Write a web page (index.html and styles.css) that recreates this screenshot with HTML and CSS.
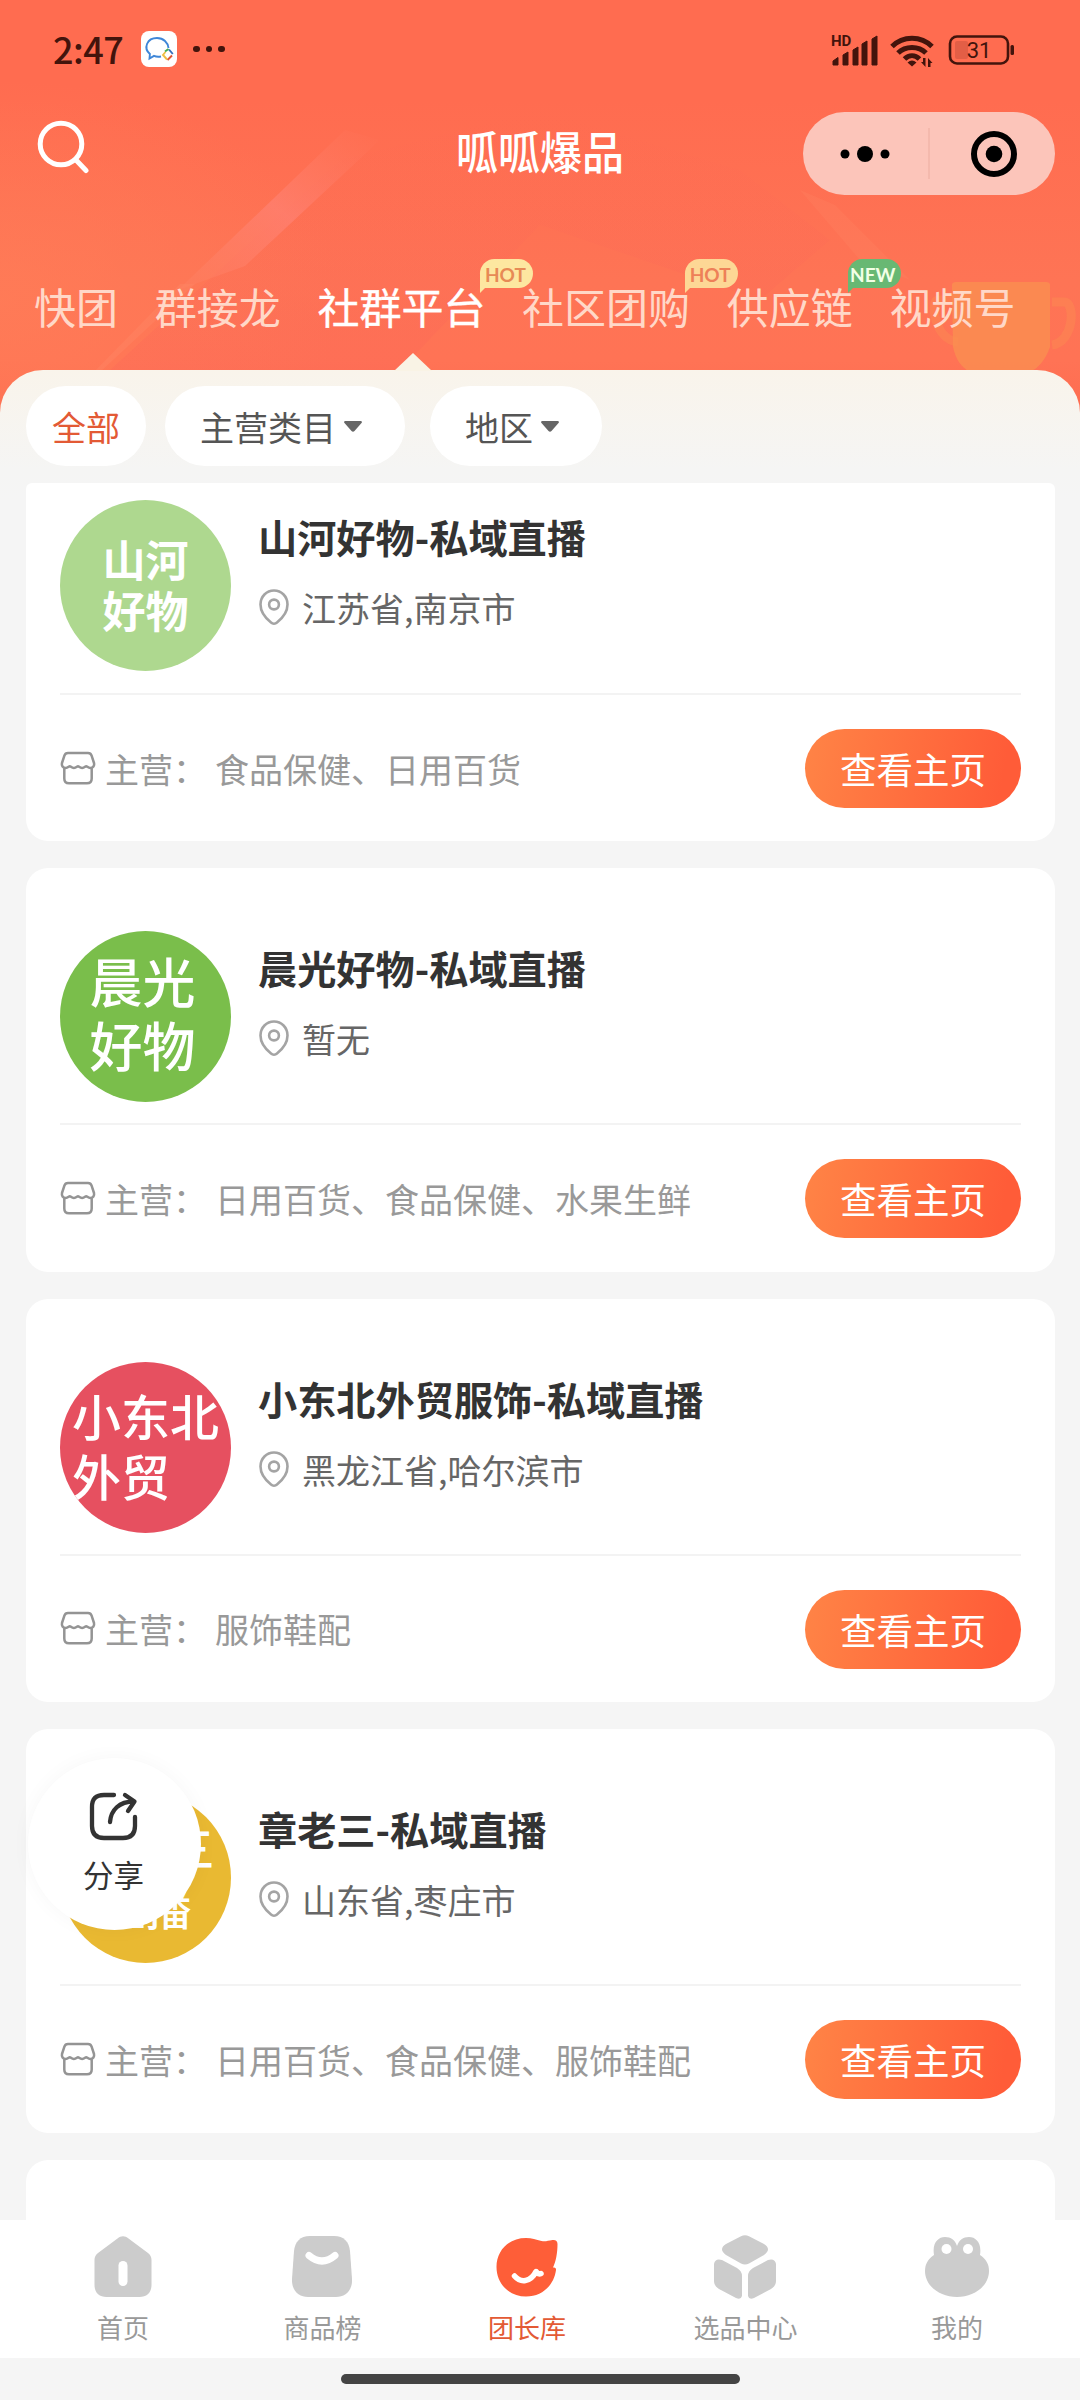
FILE: index.html
```html
<!DOCTYPE html>
<html lang="zh-CN">
<head>
<meta charset="utf-8">
<title>呱呱爆品</title>
<link rel="stylesheet" href="styles.css">
</head>
<body>
<svg width="0" height="0" class="defs" aria-hidden="true">
  <symbol id="pin" viewBox="0 0 30 36"><path d="M15 1.500C7.500 1.500 1.500 7.500 1.500 15.500c0 8 5.500 14 10.500 18a4.500 4.500 0 0 0 6 0c5-4 10.500-10 10.500-18 0-8-6-14-13.500-14z" fill="none" stroke="#a4a4a4" stroke-width="2.600"/><circle cx="15" cy="15.500" r="4.900" fill="none" stroke="#a4a4a4" stroke-width="2.600"/></symbol>
  <symbol id="shop" viewBox="0 0 36 34"><path d="M8 2h20c2 0 3 .8 3.600 2.600L34 12c.6 2.500-.9 5-3.600 5-2.300 0-3.300-1.800-4.200-1.800s-1.800 1.800-4.100 1.800-3.200-1.800-4.100-1.800-1.800 1.800-4.100 1.800-3.200-1.800-4.100-1.800S7.900 17 5.600 17C2.900 17 1.400 14.500 2 12l2.400-7.400C5 2.800 6 2 8 2zM4.300 17v10.500c0 3.500 1.700 4.800 4.700 4.800h18c3 0 4.700-1.300 4.700-4.800V17" fill="none" stroke="#949494" stroke-width="2.500" stroke-linejoin="round"/></symbol>
</svg>
<div class="phone">
  <header class="hero">
    <svg class="backdrop" viewBox="0 0 1080 430" aria-hidden="true">
      <defs>
        <linearGradient id="streak" x1="1" y1="0" x2="0" y2="1"><stop offset="0" stop-color="#ff8066" stop-opacity="0"/><stop offset=".5" stop-color="#ff8478" stop-opacity=".6"/><stop offset="1" stop-color="#ff8060" stop-opacity=".4"/></linearGradient>
        <linearGradient id="shade" x1="0" y1="0" x2="0" y2="1"><stop offset="0" stop-color="#fb6558" stop-opacity="0"/><stop offset="1" stop-color="#fb6558" stop-opacity=".3"/></linearGradient>
        <radialGradient id="glow"><stop offset="0" stop-color="#ff7c57" stop-opacity=".8"/><stop offset="1" stop-color="#ff7c57" stop-opacity="0"/></radialGradient>
      </defs>
      <ellipse cx="0" cy="300" rx="340" ry="220" fill="url(#glow)"/>
      <path d="M340 160 540 110 740 170 830 240 760 300 540 225 400 370 110 370z" fill="url(#shade)"/>
      <path d="M345 130 380 140 245 266 178 290z" fill="url(#streak)"/>
      <path d="M180 284 94 372 100 372 195 284z" fill="#ff8a68" opacity=".35"/>
      <path d="M800 190 835 205 910 280 860 260z" fill="#ff8a68" opacity=".2"/>
      <g fill="none" stroke="#fb8952" stroke-width="9" opacity=".5"><path d="M1052 302h12c12 0 10 40-12 43"/><path d="M953 300h-15c-8 0-4 40 20 42"/></g>
      <path d="M952 285q0-3 4-3h90q4 0 4 3v62c-5 14-12 21-20 25h-60c-9-5-14-12-17-25z" fill="#f99050" opacity=".75"/>
    </svg>
    <div class="status">
      <span class="clock">2:47</span>
      <svg class="app" viewBox="0 0 36 36"><rect width="36" height="36" rx="8" fill="#fff"/><path d="M20 25.500c-2.500.5-5 .3-7-.6L8.500 27.500l.4-4.500C2 17 6 7 16 7c6.500 0 11 4.500 11.500 10" fill="none" stroke="#3e86d8" stroke-width="1.900"/><g fill="none" stroke-width="1.900"><path d="M24 20.500 27.500 18" stroke="#41ad51"/><path d="M28 18.500l3.800 4.500" stroke="#3570bd"/><path d="M31 24.500 26.500 29" stroke="#e05835"/><path d="M26 28.500 22 24l2.500-3" stroke="#efbd43"/></g></svg>
      <span class="more"><i></i><i></i><i></i></span>
      <svg class="signals" viewBox="0 0 190 36" fill="#43140c">
        <text x="0" y="15" class="hd">HD</text>
        <path d="M2 34v-4l5-3.500v7.500zM12 34V24l5-3v13zM22 34V19l5-3v18zM31 34V13l5-3v24zM41 34V8l5-3v29z" stroke="#43140c" stroke-linejoin="round"/>
        <g fill="none" stroke="#43140c" stroke-width="5"><path d="M61 15.500c11-11 29-11 40 0"/><path d="M67 22c7.500-7.500 20.500-7.500 28 0"/><path d="M73.500 28c4.500-4.500 10.500-4.500 15 0"/></g>
        <path d="M76.500 31.500q4.500-4 9 0L81 35.500zM94.500 27v9l-4.500-5h2v-4zM97 36v-9l4.500 5h-2v4z"/>
        <rect x="119" y="5.500" width="58" height="27" rx="7" fill="none" stroke="#43140c" stroke-width="2.600"/><rect x="124" y="10" width="13" height="18" rx="2" opacity=".15"/><rect x="179.500" y="14" width="3.500" height="10" rx="1.500"/>
        <text x="148" y="27" text-anchor="middle" class="battery">31</text>
      </svg>
    </div>
    <div class="titlebar">
      <svg class="search" viewBox="0 0 52 54"><circle cx="24" cy="24" r="20.800" fill="none" stroke="#fff" stroke-width="5"/><path d="m39 40 10 10.500" stroke="#fff" stroke-width="5" stroke-linecap="round"/></svg>
      <h1 class="brand">呱呱爆品</h1>
      <svg class="capsule" viewBox="0 0 252 83"><rect width="252" height="83" rx="41.500" fill="#fcc5ba"/><circle cx="42" cy="42" r="4.500"/><circle cx="62" cy="42" r="8"/><circle cx="82" cy="42" r="4.500"/><path d="M126 16v51" stroke="#f2b5a9" stroke-width="1.500"/><circle cx="191" cy="42" r="20" fill="none" stroke="#000" stroke-width="6"/><circle cx="191" cy="42" r="8.300"/></svg>
    </div>
    <nav class="tabs">
      <span class="tab">快团</span>
      <span class="tab">群接龙</span>
      <span class="tab active">社群平台<b class="badge">HOT</b></span>
      <span class="tab">社区团购<b class="badge soft">HOT</b></span>
      <span class="tab">供应链<b class="badge new">NEW</b></span>
      <span class="tab">视频号</span>
    </nav>
  </header>
  <main class="panel">
    <div class="filters">
      <span class="pill all">全部</span>
      <span class="pill">主营类目<svg class="caret" viewBox="0 0 18 11"><path d="M1.500 0h15c1.300 0 1.800 1.200 1 2L10.500 10q-1.500 1.500-3 0L.5 2c-.8-.8-.3-2 1-2z" fill="#666"/></svg></span>
      <span class="pill">地区<svg class="caret" viewBox="0 0 18 11"><path d="M1.500 0h15c1.300 0 1.800 1.200 1 2L10.500 10q-1.500 1.500-3 0L.5 2c-.8-.8-.3-2 1-2z" fill="#666"/></svg></span>
    </div>
    <div class="list">
      <article class="card first">
        <div class="top"><div class="avatar mint">山河<br>好物</div><div class="info"><h2>山河好物-私域直播</h2><p><svg class="pin"><use href="#pin"/></svg>江苏省,南京市</p></div></div>
        <div class="bottom"><svg class="shop"><use href="#shop"/></svg><span class="label">主营：</span><span class="cats">食品保健、日用百货</span><span class="btn">查看主页</span></div>
      </article>
      <article class="card">
        <div class="top"><div class="avatar green">晨光<br>好物</div><div class="info"><h2>晨光好物-私域直播</h2><p><svg class="pin"><use href="#pin"/></svg>暂无</p></div></div>
        <div class="bottom"><svg class="shop"><use href="#shop"/></svg><span class="label">主营：</span><span class="cats">日用百货、食品保健、水果生鲜</span><span class="btn">查看主页</span></div>
      </article>
      <article class="card">
        <div class="top"><div class="avatar red">小东北<br>外贸</div><div class="info"><h2>小东北外贸服饰-私域直播</h2><p><svg class="pin"><use href="#pin"/></svg>黑龙江省,哈尔滨市</p></div></div>
        <div class="bottom"><svg class="shop"><use href="#shop"/></svg><span class="label">主营：</span><span class="cats">服饰鞋配</span><span class="btn">查看主页</span></div>
      </article>
      <article class="card">
        <div class="top"><div class="avatar gold">章老三<br>直播</div><div class="info"><h2>章老三-私域直播</h2><p><svg class="pin"><use href="#pin"/></svg>山东省,枣庄市</p></div></div>
        <div class="bottom"><svg class="shop"><use href="#shop"/></svg><span class="label">主营：</span><span class="cats">日用百货、食品保健、服饰鞋配</span><span class="btn">查看主页</span></div>
      </article>
      <article class="card"></article>
    </div>
  </main>
  <div class="share">
    <svg viewBox="0 0 50 50" fill="none" stroke="#333" stroke-width="4.300" stroke-linecap="round" stroke-linejoin="round"><path d="M25 3H15C7 3 3 7 3 15v19c0 8 4 12 12 12h19c8 0 12-4 12-12V25"/><path d="M21 30C22 18 30 9.500 45 9.500M36 3l9.500 6.500L39 19"/></svg>
    <span>分享</span>
  </div>
  <footer class="tabbar">
    <div class="item"><svg viewBox="0 0 64 64"><path d="M26.500 3.500c3.500-3 7.500-3 11 0L57 18c2.500 2 3.500 4 3.500 7v25c0 8-5 12-12 12h-33c-7 0-12-4-12-12V25c0-3 1-5 3.500-7z" fill="#ccc"/><rect x="27.500" y="26" width="9" height="25" rx="4.500" fill="#fff"/></svg><span>首页</span></div>
    <div class="item bag"><svg viewBox="0 0 64 64"><path d="M20 1h24c10 0 15 6 16 15l2 28c.6 12-7 18-16 18H18C9 62 1.500 56 2 44L4 16C5 7 10 1 20 1z" fill="#ccc"/><path d="M19 20.500q13 11 26 0" fill="none" stroke="#fff" stroke-width="7" stroke-linecap="round"/></svg><span>商品榜</span></div>
    <div class="item on"><svg viewBox="0 0 64 64"><path d="M31 3C14 3 1.500 15 1.500 32s13 29.500 29.500 29.500 28-11.500 30-26.500c.3-2-1-2.500-3-2.500 3-6 4.500-15 4.500-23.500 0-3-2-4.500-5-4-5 .8-7 1.800-11 1C41 4.500 37 3 31 3z" fill="#fe5e38"/><path d="M19.500 41c6 7 16 6.500 21.500-4.500 1.500 2 3 3 5 2" fill="none" stroke="#fff" stroke-width="5.500" stroke-linecap="round" stroke-linejoin="round"/></svg><span>团长库</span></div>
    <div class="item"><svg viewBox="0 0 64 64"><path d="m28 1.300q4-2 8 0L51 9q8 5 0 11L36 28.500q-4 2-8 0L13 20q-8-6 0-11zM1 29q1-6 8-4l15 8q5 3 5 8v20q-1 4-6 2L6 54q-5-3-5-8zM63 29q-1-6-8-4l-15 8q-5 3-5 8v20q1 4 6 2l17-9q5-3 5-8z" fill="#ccc"/></svg><span>选品中心</span></div>
    <div class="item"><svg viewBox="0 0 64 64"><path d="M9 20C7 8 13 2 20 2c6 0 10 3 12 9 2-6 6-9 12-9 7 0 13 6 11 18 6 4 9 9 9 16 0 15-15 26-32 26S0 51 0 36c0-7 3-12 9-16z" fill="#ccc"/><circle cx="21.500" cy="14" r="5" fill="#fff"/><circle cx="43" cy="14" r="5" fill="#fff"/></svg><span>我的</span></div>
  </footer>
  <div class="gesture"><i></i></div>
</div>
</body>
</html>
```
FILE: styles.css
```css
* { box-sizing: border-box; margin: 0; padding: 0; }
body { width: 1080px; height: 2400px; overflow: hidden; background: #f5f5f5; font-family: "Noto Sans CJK SC", sans-serif; }
svg { display: block; flex: none; }
.defs { position: absolute; }
.phone { position: relative; display: flex; flex-direction: column; height: 2400px; overflow: hidden; }

.hero { position: relative; height: 370px; }
.hero::before { content: ""; position: absolute; left: 0; top: 0; width: 1080px; height: 430px; background: linear-gradient(180deg, #ff6c50 0, #ff6c50 100px, #fe7455 280px, #ff7355 360px, #fd6a50 430px); }
.backdrop { position: absolute; left: 0; top: 0; width: 1080px; height: 430px; }
.status { position: relative; display: flex; align-items: center; height: 98px; padding: 0 59px 0 53px; }
.clock { width: 88px; padding-bottom: 2px; font-size: 36px; letter-spacing: -0.500px; line-height: 96px; color: #43140c; font-weight: 500; }
.app { width: 36px; height: 36px; }
.more { display: flex; gap: 6px; margin-left: 16px; }
.more i { width: 6.500px; height: 6.500px; border-radius: 50%; background: #43140c; }
.signals { width: 190px; height: 36px; margin-left: auto; }
.hd { font: 700 15px Roboto, sans-serif; }
.battery { font: 400 22px Roboto, sans-serif; }
.titlebar { position: relative; display: flex; align-items: center; justify-content: space-between; height: 111px; padding: 0 25px 0 37px; }
.search { width: 52px; height: 54px; margin-top: -14px; }
.brand { margin: -5px -40px 0 150px; font-size: 42px; line-height: 60px; font-weight: 500; color: #fff; transform: translateX(-1px) scaleY(1.080); }
.capsule { width: 252px; height: 83px; }
.tabs { position: relative; display: flex; gap: 36.700px; padding: 66px 0 0 34px; }
.tab { position: relative; flex: none; font-size: 42px; line-height: 62px; color: #ffd8c8; }
.tab.active { color: #fff; -webkit-text-stroke: .4px #fff; }
.badge { position: absolute; left: 100%; top: -16px; margin-left: -5px; width: 53px; height: 29px; border-radius: 15px 15px 15px 0; background: #fde7a0; color: #e78a55; font: 700 19px/32px Lato, sans-serif; text-align: center; text-indent: -3px; -webkit-text-stroke: 0; }
.badge::after { content: ""; position: absolute; left: 0; top: 26px; border-left: 8px solid #fde7a0; border-bottom: 8px solid transparent; }
.badge.soft { background: #fdd795; color: #ee8058; }
.badge.soft::after { border-left-color: #fdd795; }
.badge.new { background: #68b873; color: #f3ffe6; }
.badge.new::after { border-left-color: #68b873; }

.panel { position: relative; height: 1850px; border-radius: 43px 43px 0 0; background: linear-gradient(180deg, #f9f4eb 0, #f5f5f4 100px, #f5f5f5 130px); }
.panel::before { content: ""; position: absolute; left: 394px; top: -17px; border: 19px solid transparent; border-top: 0; border-bottom: 18px solid #f9f3e5; }
.filters { display: flex; height: 113px; padding: 16px 26px 0; }
.pill { display: flex; align-items: center; height: 80px; padding-top: 1px; margin-right: 25px; padding: 1px 43px 0 35px; border-radius: 40px; background: #fff; font-size: 34px; line-height: 50px; color: #555; }
.pill.all { margin-right: 19px; padding: 1px 26px 0; color: #e35a35; }
.caret { width: 18px; height: 11px; margin-left: 8px; }
.list { display: flex; flex-direction: column; gap: 27px; height: 1737px; padding: 0 25px 0 26px; overflow: hidden; }
.card { flex: none; height: 403.500px; padding: 63px 34px 0; border-radius: 22px; background: #fff; }
.card.first { height: 358px; padding-top: 17px; border-radius: 6px 6px 22px 22px; }
.top { display: flex; gap: 27px; height: 195px; border-bottom: 2px solid #f3f3f3; }
.avatar { width: 171px; height: 171px; padding-bottom: 4px; border-radius: 50%; display: flex; align-items: center; justify-content: center; color: #fff; font-weight: 500; overflow: hidden; flex: none; white-space: nowrap; }
.mint { background: #aed88f; font-size: 43px; line-height: 51px; font-weight: 700; }
.green { background: #7abe4b; font-size: 53px; line-height: 64px; padding: 0 6px 9px 0; }
.red { background: #e65060; font-size: 49px; line-height: 60px; }
.gold { background: #e9b932; font-size: 46px; line-height: 59px; padding: 0 0 3px; text-align: center; }
.info { padding-top: 7px; }
.info h2 { font-size: 39.200px; line-height: 58px; font-weight: 700; color: #333; }
.info p { display: flex; align-items: center; margin-top: 18px; font-size: 34px; line-height: 50px; color: #666; }
.pin { width: 30px; height: 36px; margin: -2px 13px 0 1px; }
.bottom { display: flex; align-items: center; height: 79px; margin-top: 34px; font-size: 34px; line-height: 50px; color: #999; }
.card:not(.first) .bottom { margin-top: 34px; }
.card:not(.first) .top { height: 194px; }
.shop { width: 36px; height: 34px; margin-top: -2px; }
.label { width: 110px; margin-left: 9px; }
.btn { width: 216px; height: 79px; margin-left: auto; border-radius: 40px; background: linear-gradient(100deg, #ff8446 0%, #ff5c38 90%); color: #fff; font-size: 36.500px; line-height: 79px; text-align: center; }

.share { position: absolute; left: 28px; top: 1758px; width: 173px; height: 172px; border-radius: 50%; background: #fff; box-shadow: 0 0 20px rgba(0,0,0,.035); display: flex; flex-direction: column; align-items: center; padding: 34px 2px 0 0; }
.share svg { width: 50px; height: 50px; }
.share span { margin-top: 10px; font-size: 30.500px; line-height: 44px; color: #333; }

.tabbar { display: flex; justify-content: space-between; height: 138px; padding: 15px 91px 0; background: #fff; position: relative; }
.item { display: flex; flex-direction: column; align-items: center; min-width: 64px; font-size: 26px; line-height: 38px; color: #999; }
.item.bag { margin: 0 -1px 0 1px; }
.item svg { width: 64px; height: 64px; margin-bottom: 9px; }
.item.on { color: #e35a35; }
.gesture { display: flex; justify-content: center; height: 42px; padding-top: 16px; background: #f5f5f5; }
.gesture i { width: 399px; height: 10px; border-radius: 5px; background: #444; }
```
